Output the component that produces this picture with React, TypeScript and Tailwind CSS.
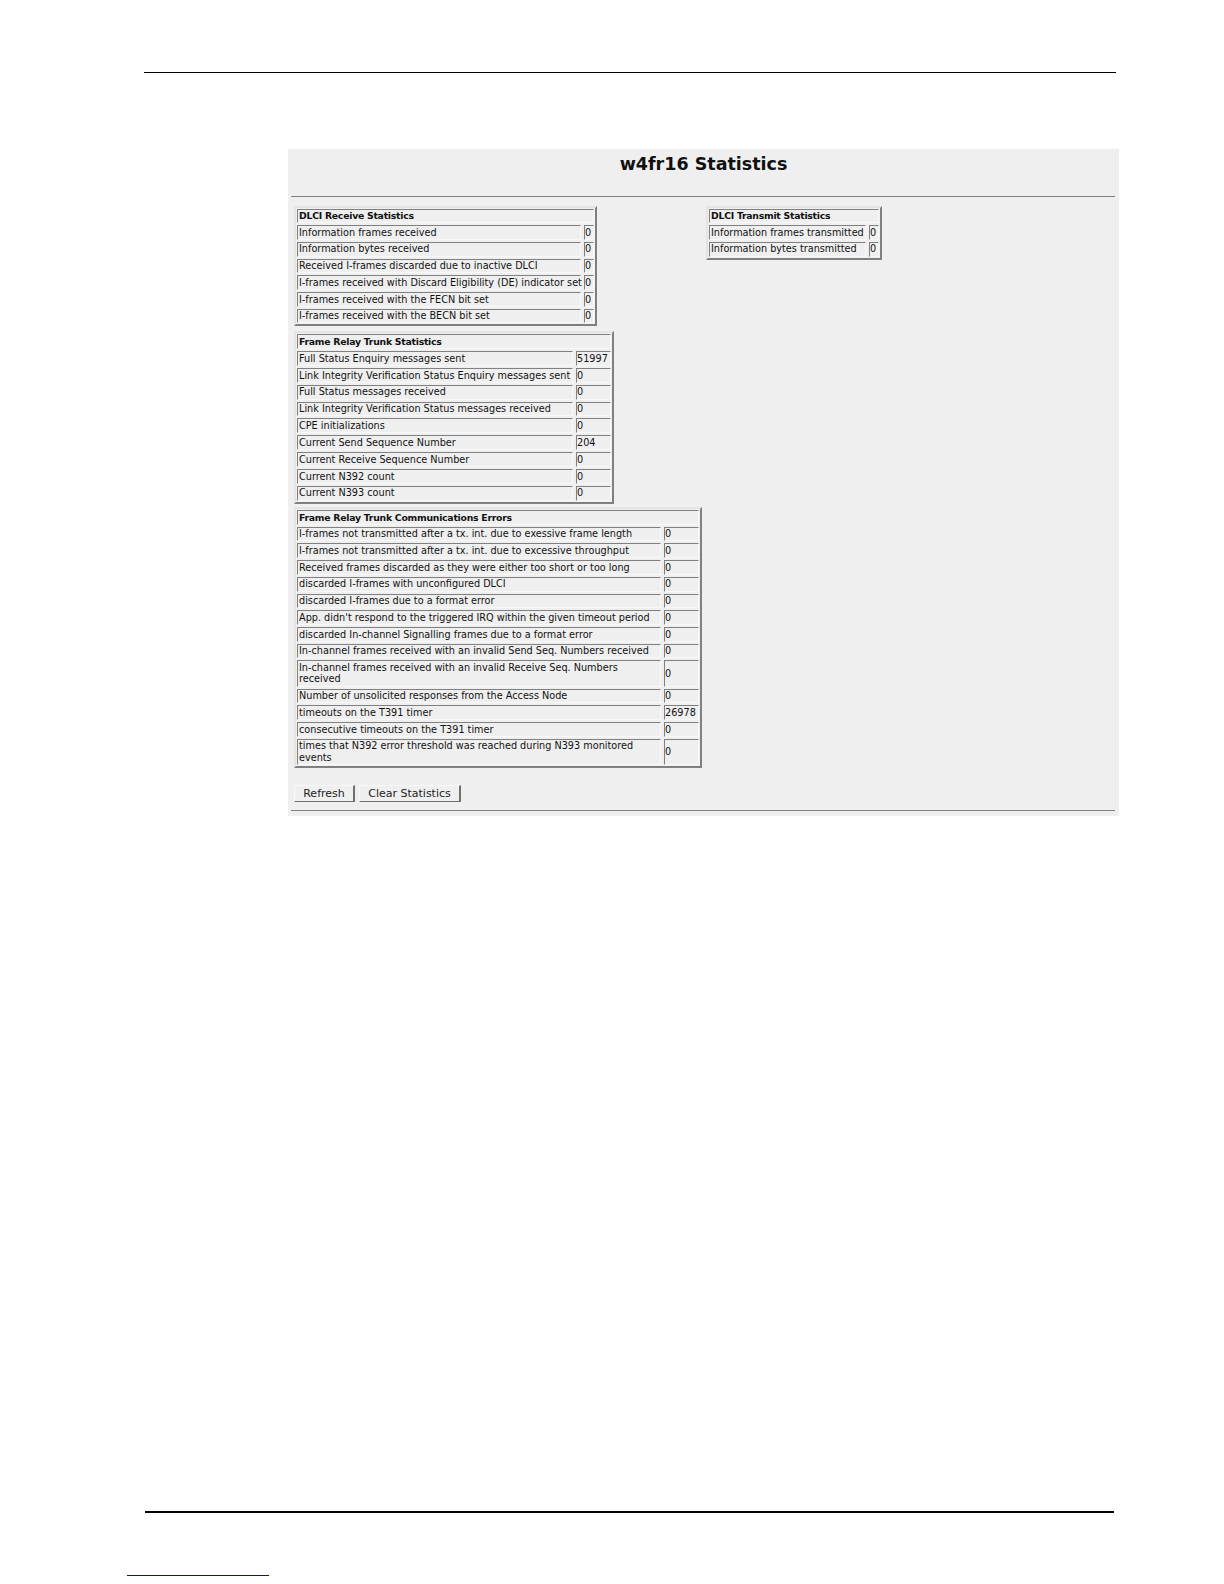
type Row = { label: string; value: string; tall?: boolean };

const receive: Row[] = [
  { label: "Information frames received", value: "0" },
  { label: "Information bytes received", value: "0" },
  { label: "Received I-frames discarded due to inactive DLCI", value: "0" },
  { label: "I-frames received with Discard Eligibility (DE) indicator set", value: "0" },
  { label: "I-frames received with the FECN bit set", value: "0" },
  { label: "I-frames received with the BECN bit set", value: "0" },
];

const transmit: Row[] = [
  { label: "Information frames transmitted", value: "0" },
  { label: "Information bytes transmitted", value: "0" },
];

const trunk: Row[] = [
  { label: "Full Status Enquiry messages sent", value: "51997" },
  { label: "Link Integrity Verification Status Enquiry messages sent", value: "0" },
  { label: "Full Status messages received", value: "0" },
  { label: "Link Integrity Verification Status messages received", value: "0" },
  { label: "CPE initializations", value: "0" },
  { label: "Current Send Sequence Number", value: "204" },
  { label: "Current Receive Sequence Number", value: "0" },
  { label: "Current N392 count", value: "0" },
  { label: "Current N393 count", value: "0" },
];

const errors: Row[] = [
  { label: "I-frames not transmitted after a tx. int. due to exessive frame length", value: "0" },
  { label: "I-frames not transmitted after a tx. int. due to excessive throughput", value: "0" },
  { label: "Received frames discarded as they were either too short or too long", value: "0" },
  { label: "discarded I-frames with unconfigured DLCI", value: "0" },
  { label: "discarded I-frames due to a format error", value: "0" },
  { label: "App. didn't respond to the triggered IRQ within the given timeout period", value: "0" },
  { label: "discarded In-channel Signalling frames due to a format error", value: "0" },
  { label: "In-channel frames received with an invalid Send Seq. Numbers received", value: "0" },
  { label: "In-channel frames received with an invalid Receive Seq. Numbers received", value: "0", tall: true },
  { label: "Number of unsolicited responses from the Access Node", value: "0" },
  { label: "timeouts on the T391 timer", value: "26978" },
  { label: "consecutive timeouts on the T391 timer", value: "0" },
  { label: "times that N392 error threshold was reached during N393 monitored events", value: "0", tall: true },
];

const cell =
  "flex items-center border border-t-[#808080] border-l-[#808080] border-r-[#f8f8f8] border-b-[#f8f8f8] leading-[11.5px] text-[#111]";
const plain = "text-[9.7px]";
const heading = "pl-px text-[9.3px] tracking-[-0.25px] font-bold";

const StatTable = ({ title, rows, cols, rowHeight = "h-[14.7px]" }: { title: string; rows: Row[]; cols: string; rowHeight?: string }) => (
  <div className="w-fit border-2 border-t-[#e4e4e4] border-l-[#e4e4e4] border-r-[#808080] border-b-[#808080] p-px">
    <div className={`grid gap-x-[3px] gap-y-[2px] ${cols}`}>
      <div className={`col-span-2 ${heading} ${cell} h-[14.7px] whitespace-nowrap`}>{title}</div>
      {rows.map((row) => (
        <div key={row.label} className="contents">
          <div className={`pl-px ${plain} ${cell} ${row.tall ? "h-[26.4px]" : `${rowHeight} whitespace-nowrap`}`}>{row.label}</div>
          <div className={`${plain} ${cell} ${row.tall ? "h-[26.4px]" : rowHeight}`}>{row.value}</div>
        </div>
      ))}
    </div>
  </div>
);

const PanelButton = ({ label, width }: { label: string; width: string }) => (
  <button className={`h-[17px] ${width} border border-t-[#f8f8f8] border-l-[#f8f8f8] border-r-[#707070] border-b-[#707070] border-r-2 bg-[#efefef] text-[11px] leading-none text-[#222]`}>
    {label}
  </button>
);

export default function App() {
  return (
    <div className="relative h-[1584px] w-[1224px] overflow-hidden bg-white font-['DejaVu_Sans',sans-serif]">
      <div className="ml-[144px] h-[72.5px] w-[972px] border-b-[1.5px] border-black" />

      <div className="ml-[288px] mt-[76px] h-[667px] w-[831px] bg-[#efefef] px-[3px]">
        <h1 className="flex h-[47px] items-start justify-center pb-px pt-[3px] text-[17.5px] font-bold leading-6 text-[#111]">
          w4fr16 Statistics
        </h1>
        <div className="h-px w-[824px] bg-[#808080]" />

        <div className="mt-[9px] flex pl-[3px]">
          <div className="flex w-[412px] flex-col">
            <StatTable title="DLCI Receive Statistics" rows={receive} cols="grid-cols-[284px_10px]" />
            <div className="mt-[5px]">
              <StatTable title="Frame Relay Trunk Statistics" rows={trunk} cols="grid-cols-[276px_35px]" rowHeight="h-[14.85px]" />
            </div>
            <div className="mt-[3.5px]">
              <StatTable title="Frame Relay Trunk Communications Errors" rows={errors} cols="grid-cols-[364px_35px]" />
            </div>
          </div>
          <div>
            <StatTable title="DLCI Transmit Statistics" rows={transmit} cols="grid-cols-[157px_10px]" />
          </div>
        </div>

        <div className="ml-[3px] mt-[17px] flex gap-[4px]">
          <PanelButton label="Refresh" width="w-[61px]" />
          <PanelButton label="Clear Statistics" width="w-[102px]" />
        </div>
        <div className="mt-[8px] h-px w-[824px] bg-[#808080]" />
      </div>

      <div className="ml-[145px] mt-[695.5px] h-[1.5px] w-[969px] bg-black" />
      <div className="ml-[127px] mt-[62px] h-[1.5px] w-[142px] bg-[#10108c]" />
    </div>
  );
}
